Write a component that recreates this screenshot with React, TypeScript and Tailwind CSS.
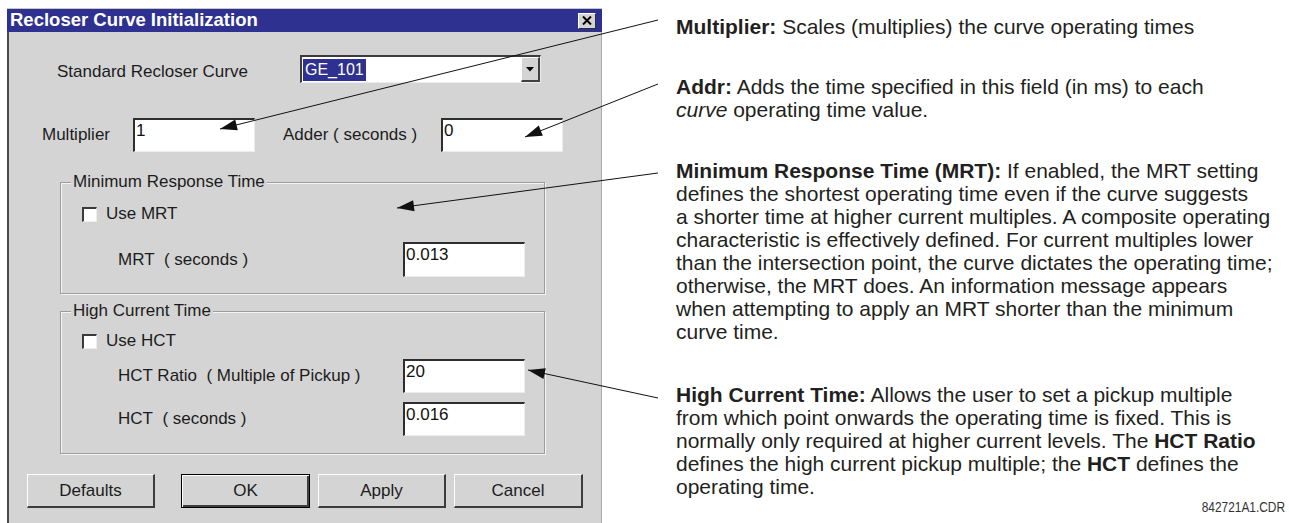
import React from "react";

type Pt = [number, number];

// leader lines from the notes to the dialog fields
const leaders: { from: Pt; to: Pt }[] = [
  { from: [658, 20], to: [220, 129] },
  { from: [658, 84], to: [525, 137] },
  { from: [658, 173], to: [397, 208] },
  { from: [658, 398], to: [528, 370] },
];

function arrowHead(from: Pt, to: Pt) {
  const dx = from[0] - to[0];
  const dy = from[1] - to[1];
  const len = Math.hypot(dx, dy);
  const ux = dx / len;
  const uy = dy / len;
  const L = 17;
  const W = 5.5;
  const bx = to[0] + ux * L;
  const by = to[1] + uy * L;
  return `${to[0]},${to[1]} ${bx - uy * W},${by + ux * W} ${bx + uy * W},${by - ux * W}`;
}

function Leaders() {
  return (
    <svg className="absolute inset-0 pointer-events-none" width={1289} height={523}>
      {leaders.map((l, i) => (
        <g key={i}>
          <line x1={l.from[0]} y1={l.from[1]} x2={l.to[0]} y2={l.to[1]} stroke="#111" strokeWidth={1} />
          <polygon points={arrowHead(l.from, l.to)} fill="#111" />
        </g>
      ))}
    </svg>
  );
}

function Field({ value }: { value: string }) {
  return (
    <div className="w-[122px] h-full bg-white border-t-2 border-l-2 border-t-[#2e2e2e] border-l-[#2e2e2e] border-b border-r border-b-[#ececec] border-r-[#ececec] pl-[1px] text-[17px] leading-[21px] text-[#111]">
      {value}
    </div>
  );
}

function Check({ label }: { label: string }) {
  return (
    <div className="flex items-center h-[20px] ml-[21px]">
      <span className="w-[15px] h-[15px] bg-white border-t-2 border-l-2 border-t-[#3a3a3a] border-l-[#3a3a3a] border-b border-r border-b-[#eeeeee] border-r-[#eeeeee]" />
      <span className="ml-[9px]">{label}</span>
    </div>
  );
}

function Btn({ label, def, className }: { label: string; def?: boolean; className: string }) {
  return (
    <div
      className={
        def
          ? `h-[34px] bg-[#d4d4d4] border border-black shadow-[inset_1px_1px_0_#ffffff,inset_-2px_-2px_0_#404040] flex items-center justify-center ${className}`
          : `h-[34px] bg-[#d4d4d4] border-t border-l border-t-white border-l-white border-b-2 border-r-2 border-b-[#3c3c3c] border-r-[#3c3c3c] flex items-center justify-center ${className}`
      }
    >
      {label}
    </div>
  );
}

function Dialog() {
  return (
    <div className="ml-[7px] mt-[8px] w-[595px] h-[515px] flex flex-col border-t border-t-[#c8c8c8]">
      <div className="h-[23px] bg-[#2e318f] flex items-center justify-between pl-[3px] pr-[6px]">
        <span className="text-white font-bold text-[18.5px] leading-none">Recloser Curve Initialization</span>
        <div className="w-[18px] h-[16px] bg-[#d4d4d4] border-t border-l border-t-white border-l-white border-b border-r border-b-[#303030] border-r-[#303030] flex items-center justify-center">
          <svg width="10" height="9" viewBox="0 0 10 9">
            <path d="M1 0.5 L9 8.5 M9 0.5 L1 8.5" stroke="#000" strokeWidth="2" />
          </svg>
        </div>
      </div>

      <div className="flex-1 bg-[#d4d4d4] border-l-2 border-l-[#4a4a4a] border-r border-r-[#a8a8a8] flex flex-col text-[17px] text-[#1c1c1c]">
        <div className="flex items-center h-[28px] mt-[23px]">
          <span className="ml-[48px] w-[243px] mt-[5px]">Standard Recloser Curve</span>
          <div className="w-[241px] h-full bg-white border-t-2 border-l-2 border-t-[#3c3c3c] border-l-[#3c3c3c] border-b border-r border-b-[#ececec] border-r-[#ececec] flex items-center pl-[1px]">
            <span className="bg-[#2e318f] text-white text-[16px] leading-[22px] px-[2px]">GE_101</span>
            <div className="ml-auto w-[19px] h-full bg-[#d4d4d4] border-t border-l border-t-white border-l-white border-b-2 border-r-2 border-b-[#404040] border-r-[#404040] flex items-center justify-center">
              <svg width="8" height="5" viewBox="0 0 8 5">
                <path d="M0 0 H8 L4 4.5 Z" fill="#000" />
              </svg>
            </div>
          </div>
        </div>

        <div className="flex items-center h-[34px] mt-[35px]">
          <span className="ml-[33px] w-[91px]">Multiplier</span>
          <Field value="1" />
          <span className="ml-[28px] w-[158px]">Adder ( seconds )</span>
          <Field value="0" />
        </div>

        <fieldset className="ml-[51px] mt-[20px] w-[485px] border border-[#9c9c9c] shadow-[inset_1px_1px_0_#f4f4f4,1px_1px_0_#f4f4f4] pb-[16px]">
          <legend className="ml-[10px] px-[2px] leading-[20px] bg-[#d4d4d4]">Minimum Response Time</legend>
          <div className="mt-[12px]">
            <Check label="Use MRT" />
          </div>
          <div className="flex items-center h-[35px] mt-[18px]">
            <span className="ml-[57px] w-[285px]">MRT&nbsp; ( seconds )</span>
            <Field value="0.013" />
          </div>
        </fieldset>

        <fieldset className="ml-[51px] mt-[7px] w-[485px] border border-[#9c9c9c] shadow-[inset_1px_1px_0_#f4f4f4,1px_1px_0_#f4f4f4] pb-[17px]">
          <legend className="ml-[10px] px-[2px] leading-[20px] bg-[#d4d4d4]">High Current Time</legend>
          <div className="mt-[10px]">
            <Check label="Use HCT" />
          </div>
          <div className="flex items-center h-[34px] mt-[8px]">
            <span className="ml-[57px] w-[285px]">HCT Ratio&nbsp; ( Multiple of Pickup )</span>
            <Field value="20" />
          </div>
          <div className="flex items-center h-[34px] mt-[9px]">
            <span className="ml-[57px] w-[285px]">HCT&nbsp; ( seconds )</span>
            <Field value="0.016" />
          </div>
        </fieldset>

        <div className="flex mt-[20px]">
          <Btn label="Defaults" className="ml-[18px] w-[128px]" />
          <Btn label="OK" def className="ml-[26px] w-[129px]" />
          <Btn label="Apply" className="ml-[8px] w-[128px]" />
          <Btn label="Cancel" className="ml-[8px] w-[129px]" />
        </div>
      </div>
    </div>
  );
}

function Notes() {
  return (
    <div className="ml-[74px] pt-[15px] w-[613px] flex flex-col text-[21px] leading-[23px] text-[#231f20] whitespace-nowrap">
      <p>
        <b>Multiplier:</b> Scales (multiplies) the curve operating times
      </p>
      <p className="mt-[37px]">
        <b>Addr:</b> Adds the time specified in this field (in ms) to each
        <br />
        <i>curve</i> operating time value.
      </p>
      <p className="mt-[38px]">
        <b>Minimum Response Time (MRT):</b> If enabled, the MRT setting
        <br />
        defines the shortest operating time even if the curve suggests
        <br />
        a shorter time at higher current multiples. A composite operating
        <br />
        characteristic is effectively defined. For current multiples lower
        <br />
        than the intersection point, the curve dictates the operating time;
        <br />
        otherwise, the MRT does. An information message appears
        <br />
        when attempting to apply an MRT shorter than the minimum
        <br />
        curve time.
      </p>
      <p className="mt-[40px]">
        <b>High Current Time:</b> Allows the user to set a pickup multiple
        <br />
        from which point onwards the operating time is fixed. This is
        <br />
        normally only required at higher current levels. The <b>HCT Ratio</b>
        <br />
        defines the high current pickup multiple; the <b>HCT</b> defines the
        <br />
        operating time.
      </p>
      <p className="self-end mr-[4px] mt-[2px] text-[14px] leading-[14px] text-[#333] scale-x-[0.85] origin-right">
        842721A1.CDR
      </p>
    </div>
  );
}

export default function App() {
  return (
    <div className="relative w-[1289px] h-[523px] bg-white overflow-hidden flex font-['Liberation_Sans',Arial,sans-serif]">
      <Dialog />
      <Notes />
      <Leaders />
    </div>
  );
}
